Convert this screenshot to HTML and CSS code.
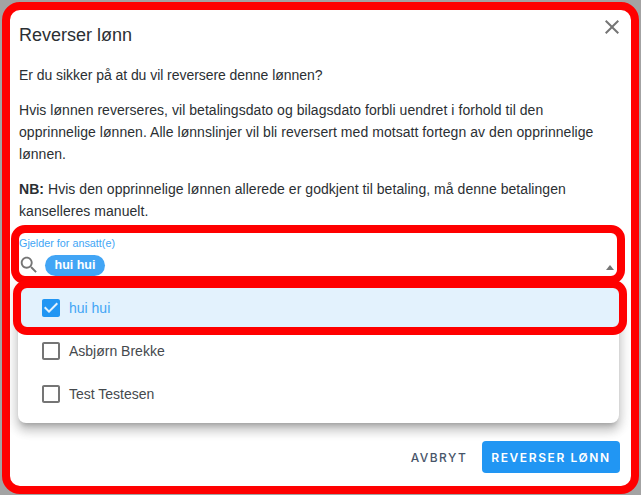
FILE: index.html
```html
<!DOCTYPE html>
<html lang="no">
<head>
<meta charset="utf-8">
<title>Reverser lønn</title>
<link rel="stylesheet" href="styles.css">
</head>
<body>
<main class="dialog">
  <button class="close" aria-label="Lukk">
    <svg viewBox="0 0 24 24" width="24" height="24"><path d="M19 6.41 17.59 5 12 10.59 6.41 5 5 6.41 10.59 12 5 17.59 6.41 19 12 13.41 17.59 19 19 17.59 13.41 12z"/></svg>
  </button>
  <h1 class="title">Reverser lønn</h1>
  <div class="content">
    <p class="lead">Er du sikker på at du vil reversere denne lønnen?</p>
    <p>Hvis lønnen reverseres, vil betalingsdato og bilagsdato forbli uendret i forhold til den opprinnelige lønnen. Alle lønnslinjer vil bli reversert med motsatt fortegn av den opprinnelige lønnen.</p>
    <p><b>NB:</b> Hvis den opprinnelige lønnen allerede er godkjent til betaling, må denne betalingen kanselleres manuelt.</p>
  </div>
  <div class="field">
    <span class="label">Gjelder for ansatt(e)</span>
    <div class="field-row">
      <svg class="search" viewBox="0 0 24 24" width="22" height="22"><path d="M15.5 14h-.79l-.28-.27C15.41 12.59 16 11.11 16 9.5 16 5.91 13.09 3 9.5 3S3 5.91 3 9.5 5.91 16 9.5 16c1.61 0 3.09-.59 4.23-1.57l.27.28v.79l5 4.99L20.49 19l-4.99-5zm-6 0C7.01 14 5 11.99 5 9.5S7.01 5 9.5 5 14 7.01 14 9.5 11.99 14 9.5 14z"/></svg>
      <span class="chip">hui hui</span>
      <span class="arrow"></span>
    </div>
  </div>
  <div class="menu">
    <div class="option selected">
      <svg class="check" viewBox="0 0 24 24" width="24" height="24"><path fill="#2196f3" d="M19 3H5c-1.11 0-2 .9-2 2v14c0 1.1.89 2 2 2h14c1.11 0 2-.9 2-2V5c0-1.1-.89-2-2-2zm-9 14-5-5 1.41-1.41L10 14.17l7.59-7.59L19 8l-9 9z"/></svg>
      <span>hui hui</span>
    </div>
    <div class="option">
      <svg class="check" viewBox="0 0 24 24" width="24" height="24"><path fill="#757575" d="M19 5v14H5V5h14m0-2H5c-1.1 0-2 .9-2 2v14c0 1.1.9 2 2 2h14c1.1 0 2-.9 2-2V5c0-1.1-.9-2-2-2z"/></svg>
      <span>Asbjørn Brekke</span>
    </div>
    <div class="option">
      <svg class="check" viewBox="0 0 24 24" width="24" height="24"><path fill="#757575" d="M19 5v14H5V5h14m0-2H5c-1.1 0-2 .9-2 2v14c0 1.1.9 2 2 2h14c1.1 0 2-.9 2-2V5c0-1.1-.9-2-2-2z"/></svg>
      <span>Test Testesen</span>
    </div>
  </div>
  <div class="actions">
    <button class="btn cancel">AVBRYT</button>
    <button class="btn primary">REVERSER LØNN</button>
  </div>
  <div class="mark mark-option"></div>
</main>
</body>
</html>
```
FILE: styles.css
```css
* { box-sizing: border-box; }
html, body { margin: 0; height: 100%; }
body {
  width: 641px;
  height: 495px;
  padding: 2px 2px 1px 2px;
  background: #a3a3a3;
  overflow: hidden;
  font-family: "Liberation Sans", Arial, sans-serif;
  color: #2b2f33;
}
.dialog {
  position: relative;
  width: 637px;
  height: 492px;
  padding: 0 9px;
  background: #fff;
  border: 8px solid #ff0000;
  border-radius: 18px;
}
.close {
  position: absolute;
  top: 5px;
  right: 7px;
  width: 24px;
  height: 24px;
  padding: 0;
  border: 0;
  background: none;
}
.close svg { display: block; fill: #757575; }
.title {
  margin: 0;
  padding-top: 13px;
  font-size: 18px;
  line-height: 24px;
  font-weight: 400;
}
.content { max-width: 590px; padding-top: 17px; font-size: 14px; line-height: 22px; letter-spacing: 0.05px; }
.content p { margin: 0 0 13px; }
.content .lead { letter-spacing: -0.05px; }
.content b { font-weight: 700; }
.field {
  position: relative;
  margin: -10px -1px 0 -8px;
  width: 614px;
  height: 59px;
  padding: 0;
  border: 8px solid #ff0000;
  border-radius: 14px;
}
.label {
  display: block;
  font-size: 10.8px;
  line-height: 21px;
  color: #42a5f5;
}
.field-row {
  display: flex;
  align-items: center;
  height: 22px;
}
.search { fill: #757575; flex: none; margin-left: -1px; }
.chip {
  margin-left: 5px;
  width: 60px;
  height: 21px;
  border-radius: 11px;
  background: #42a5f5;
  color: #fff;
  font-size: 12.5px;
  font-weight: 700;
  line-height: 21px;
  text-align: center;
}
.arrow {
  margin-left: auto;
  margin-right: 3px;
  margin-top: 5px;
  width: 0;
  height: 0;
  border: 4px solid transparent;
  border-top: 0;
  border-bottom: 5px solid #757575;
}
.menu {
  position: relative;
  margin: 0 3px 0 -1px;
  height: 139px;
  padding-top: 2px;
  background: #fff;
  border-radius: 0 0 8px 8px;
  box-shadow: 0 5px 5px -3px rgba(0,0,0,.2), 0 8px 10px 1px rgba(0,0,0,.14), 0 3px 14px 2px rgba(0,0,0,.12);
  font-size: 14px;
  color: #45494d;
}
.option {
  display: flex;
  align-items: center;
  gap: 6px;
  height: 43px;
  padding-left: 21px;
}
.option.selected { background: #e3f2fd; color: #42a5f5; }
.check { flex: none; }
.actions {
  display: flex;
  justify-content: flex-end;
  align-items: center;
  gap: 14px;
  margin-top: 18px;
  padding-right: 2px;
}
.btn {
  height: 32px;
  padding: 0;
  border: 0;
  border-radius: 4px;
  font-family: Inter, "Liberation Sans", sans-serif;
  font-size: 12px;
  letter-spacing: 1.6px;
  font-weight: 600;
  background: none;
}
.cancel { color: #475569; width: 58px; font-weight: 500; letter-spacing: 1.45px; }
.primary { width: 138px; background: #2196f3; color: #fff; }
.mark {
  position: absolute;
  pointer-events: none;
  border: 8px solid #ff0000;
  border-radius: 14px;
}
.mark-option { left: 3px; top: 270px; width: 614px; height: 55px; }
```
